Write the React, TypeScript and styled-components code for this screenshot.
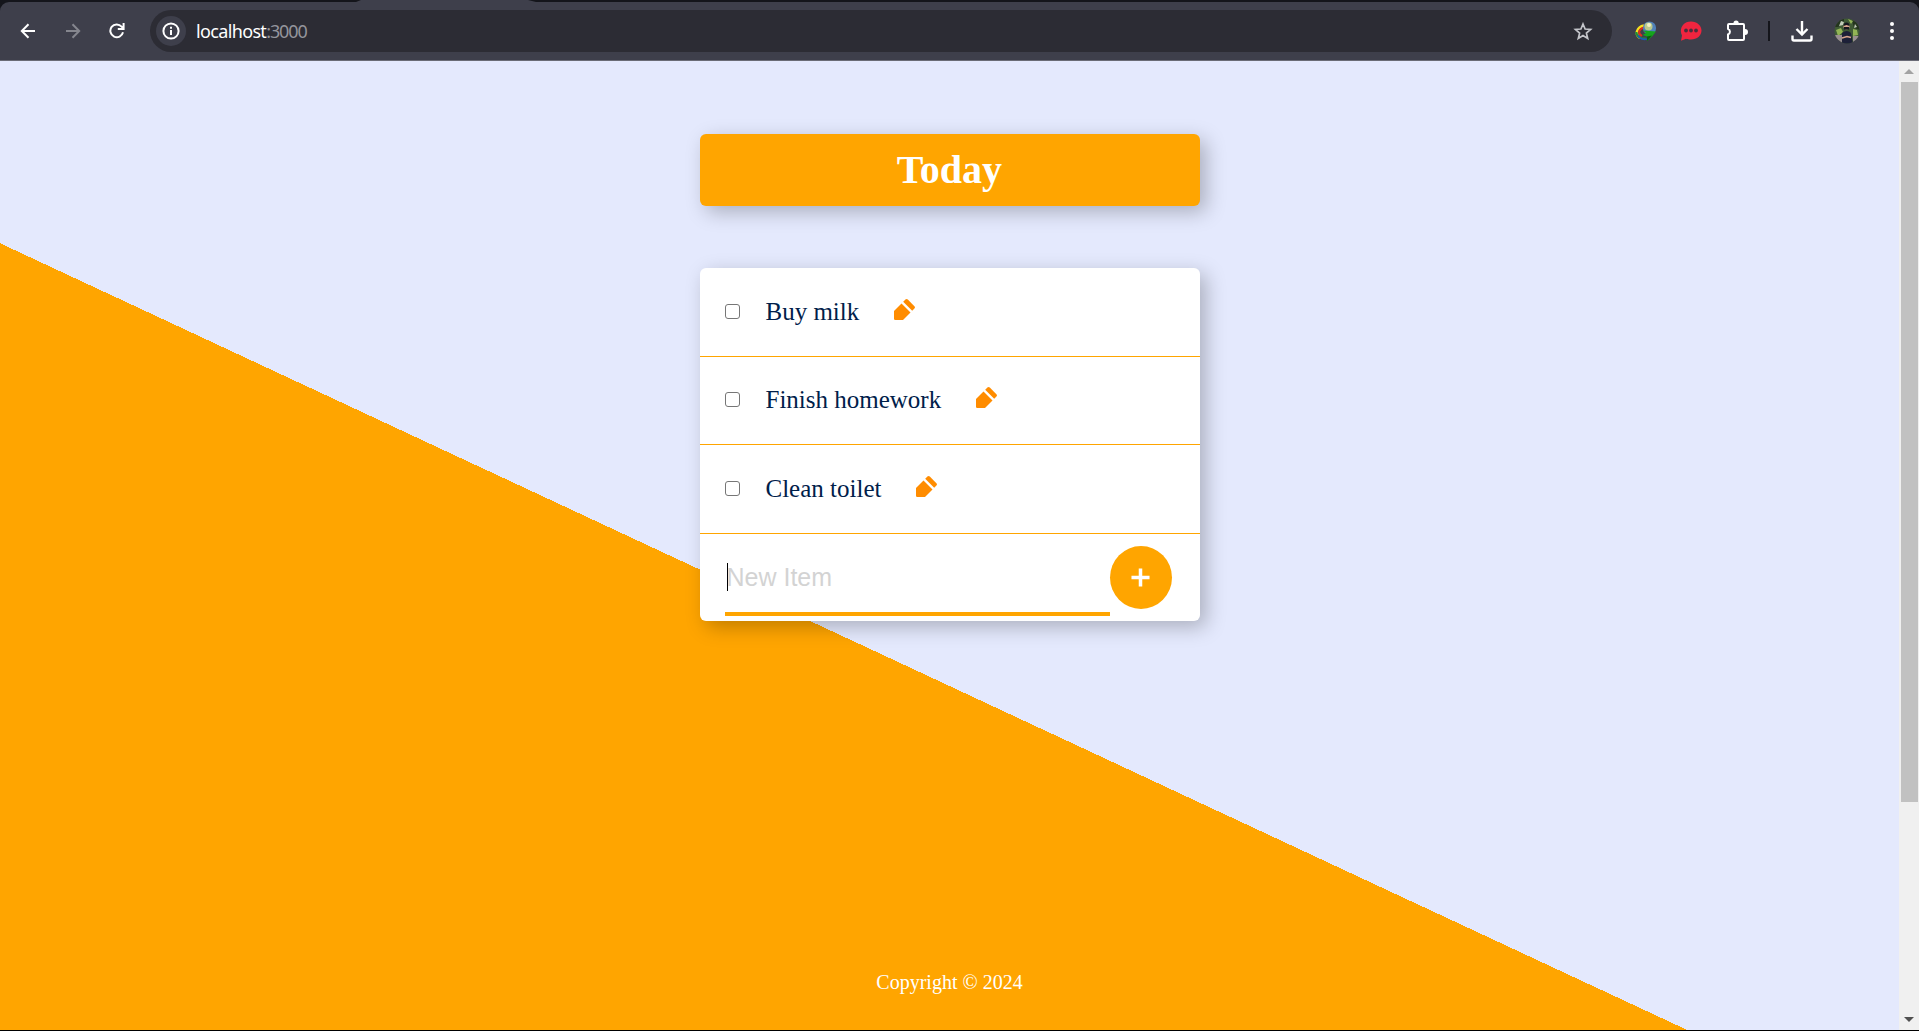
import React from "react";
import styled, { createGlobalStyle } from "styled-components";

const GlobalStyle = createGlobalStyle`
  html, body { margin: 0; padding: 0; overflow: hidden; }
  body { background: #000; }
  * { box-sizing: border-box; }
`;

const Window = styled.div`
  width: 1919px;
  height: 1031px;
  display: flex;
  flex-direction: column;
  background: #000;
  overflow: hidden;
`;

const TabStrip = styled.div`
  height: 2px;
  flex: none;
  display: flex;
  padding-left: 356px;
  background: #14151b;
`;

const ActiveTabFoot = styled.div`
  width: 180px;
  height: 2px;
  background: #3e3f4b;
  clip-path: polygon(5px 0, 172px 0, 100% 100%, 0 100%);
`;

const ToolbarBack = styled.div`
  height: 59px;
  flex: none;
  background: #14151b;
`;

const Toolbar = styled.div`
  height: 59px;
  display: flex;
  align-items: center;
  background: #3e3f4b;
  border-bottom: 1px solid #6a6b76;
  border-radius: 9px 9px 0 0;
  padding: 0 12px 0 13px;
`;

const NavGroup = styled.div`
  display: flex;
  gap: 14.500px;
  width: 137px;
  flex: none;
`;

const IconSlot = styled.span<{ $w?: number }>`
  width: ${(p) => p.$w ?? 30}px;
  height: 30px;
  display: flex;
  flex: none;
  align-items: center;
  justify-content: center;
`;

const AddressBar = styled.div`
  width: 1462px;
  height: 42px;
  flex: none;
  display: flex;
  align-items: center;
  border-radius: 21px;
  background: #2c2c34;
  padding: 0 14px 0 6px;
`;

const InfoBadge = styled.span`
  width: 30px;
  height: 30px;
  border-radius: 50%;
  display: flex;
  align-items: center;
  justify-content: center;
  background: #3e3f4b;
`;

const Address = styled.span`
  flex: 1;
  margin-left: 10px;
  font: 18px/24px "Noto Sans", "Open Sans", sans-serif;
  letter-spacing: -0.65px;
  color: #fff;
`;

const Port = styled.span`
  color: #94959c;
  letter-spacing: -1.1px;
`;

const Extensions = styled.div`
  flex: 1;
  display: flex;
  align-items: center;
  padding-left: 19px;
`;

const Divider = styled.span`
  width: 2px;
  height: 20px;
  margin: 0 17px 0 16px;
  background: #14151b;
`;

const ProfileGroup = styled.div`
  display: flex;
  gap: 15px;
  margin-left: auto;
`;

const Viewport = styled.div`
  height: 969px;
  flex: none;
  display: flex;
  overflow: hidden;
`;

const Page = styled.main`
  width: 1899px;
  height: 1250px;
  flex: none;
  display: flex;
  flex-direction: column;
  align-items: center;
  padding-top: 73px;
  background: linear-gradient(25deg, #ffa500 50%, #e4e9fd 50%);
  font-family: "Liberation Serif", "Times New Roman", serif;
`;

const Panel = styled.section`
  width: 500px;
  flex: none;
  border-radius: 6px;
  background: #fff;
  box-shadow: 6px 6px 20px rgba(0, 0, 0, 0.25);
`;

const Heading = styled(Panel)`
  height: 72px;
  display: flex;
  align-items: center;
  justify-content: center;
  background: #ffa500;
  margin-bottom: 62px;
`;

const Title = styled.h1`
  margin: 0;
  font-size: 40px;
  line-height: 46px;
  color: #fff;
`;

const Item = styled.div<{ $height: number; $top: number }>`
  height: ${(p) => p.$height}px;
  display: flex;
  align-items: flex-start;
  padding: ${(p) => p.$top}px 25px 0;
  border-bottom: 1px solid #ffa500;
`;

const Checkbox = styled.input`
  appearance: none;
  width: 15px;
  height: 15px;
  margin: 7px 26px 0 0;
  border: 1px solid #767676;
  border-radius: 3px;
  background: #fff;
`;

const ItemText = styled.p`
  margin: 0 35px 0 0;
  font-size: 25px;
  line-height: 29px;
  color: #00204a;
`;

const EditButton = styled.button`
  margin: 2px 0 0;
  padding: 0;
  border: 0;
  background: none;
  line-height: 0;
`;

const NewItem = styled.form`
  height: 87px;
  display: flex;
  padding-left: 25px;
`;

const Entry = styled.div`
  width: 385px;
  height: 82px;
  display: flex;
  align-items: center;
  border-bottom: 4px solid #ffa500;
  padding: 8px 0 0 2px;
`;

const Caret = styled.span`
  width: 1px;
  height: 28px;
  margin-right: -1px;
  background: #000;
`;

const Placeholder = styled.span`
  font: 25px/29px "Liberation Sans", Arial, sans-serif;
  color: #d3d3d3;
`;

const AddButton = styled.button`
  width: 62px;
  height: 63px;
  margin-top: 12px;
  padding: 0;
  border: 0;
  border-radius: 50%;
  display: flex;
  align-items: center;
  justify-content: center;
  background: #ffa500;
`;

const Footer = styled.footer`
  margin-top: 350px;
  font-size: 20px;
  line-height: 23px;
  color: #fff;
`;

const Scrollbar = styled.div`
  width: 20px;
  height: 969px;
  flex: none;
  display: flex;
  flex-direction: column;
  align-items: center;
  background: #f0f0f0;
`;

const Thumb = styled.div`
  width: 17px;
  height: 720px;
  margin-bottom: auto;
  background: #c1c1c1;
`;

const ScrollArrow = styled.span`
  height: 21px;
  display: flex;
  align-items: center;
`;

const PencilIcon = () => (
  <svg width="21" height="21" viewBox="0 0 21 21" fill="#ff8c00">
    <path d="M0 12 7.500 4.500 16.500 13.500 9 21H1.200Q0 21 0 19.800z" />
    <path d="M9.200 2.800 11.400.6q1.200-1.100 2.400 0l6.600 6.600q1.100 1.200 0 2.400l-2.200 2.200z" />
  </svg>
);

const DownloadManagerIcon = () => (
  <svg width="22" height="20" viewBox="0 0 22 20" fill="none">
    <path d="M9 4.500C2 6 -1 13 5 17" stroke="#f4df1e" strokeWidth="2.400" />
    <path d="M9 6.500C4 8 2 12 7 15" stroke="#d9301f" strokeWidth="2" />
    <path d="M1.300 11c0 4 4 7.500 10 6.500" stroke="#1c8d3c" strokeWidth="2.200" />
    <path d="M3 14.500c2 3.500 6 4.500 9 3.500" stroke="#1d55b8" strokeWidth="1.600" />
    <circle cx="14.500" cy="7" r="6.600" fill="#5081b9" />
    <circle cx="13.500" cy="5.500" r="4" fill="#b9c98c" />
    <circle cx="14" cy="4" r="2" fill="#f0efc4" />
    <path d="m8 9.500 13 1-3.500 4.500-5.500 5v-4.500L7.500 14l3.500-2z" fill="#14a51c" />
    <path d="m12 15.500 5-1-5 5.500z" fill="#0b5d12" />
  </svg>
);

const ChatIcon = () => (
  <svg width="22" height="20" viewBox="0 0 22 20">
    <path d="M1 19.800 2 14.500C-1 9 2 .5 11 .5c6 0 10.500 4 10.500 9s-4.500 9-10.500 9c-2 0-3.500-.2-5-.8z" fill="#f0253f" />
    <g fill="#4a2f3d">
      <circle cx="6" cy="9.500" r="1.900" />
      <circle cx="11" cy="9.500" r="1.900" />
      <circle cx="16" cy="9.500" r="1.900" />
    </g>
  </svg>
);

const Avatar = () => (
  <svg width="26" height="26" viewBox="0 0 26 26">
    <clipPath id="avatar-round"><circle cx="13" cy="13" r="12.500" /></clipPath>
    <g clipPath="url(#avatar-round)">
      <rect width="26" height="26" fill="#3f5a35" />
      <path d="M0 0h10v5L4 9H0zM18 2l6 3 2 7-6-2z" fill="#24351f" />
      <path d="M2 12 7 10l2 4-5 4zM19 11l4 1 1 5-5 1zM14 1l5 2-2 3z" fill="#92b455" />
      <path d="M7 3l3 1-1 3-4 1zM21 6l2 3-3 1z" fill="#c2cdb9" />
      <path d="M0 17h8v9H0zM19 18h7v8h-7z" fill="#9a8f91" />
      <path d="M8 15q5-4 9 0l2 11H8z" fill="#1d2038" />
      <circle cx="12.500" cy="8.500" r="3" fill="#d9a58d" />
      <path d="M9.500 8q0-3.500 3-3.500t3 3.500l-3-1zM10 9h5v2.500h-5z" fill="#16161f" />
      <path d="m8 20 5-1.500 4 1" stroke="#d9a58d" strokeWidth="1.600" fill="none" />
    </g>
  </svg>
);

const items = [
  { label: "Buy milk", height: 89, top: 29 },
  { label: "Finish homework", height: 88, top: 28 },
  { label: "Clean toilet", height: 89, top: 29 },
];

export default function App() {
  return (
    <Window>
      <GlobalStyle />
      <TabStrip><ActiveTabFoot /></TabStrip>
      <ToolbarBack>
        <Toolbar>
          <NavGroup>
            <IconSlot>
              <svg width="16" height="16" viewBox="0 0 16 16" fill="none" stroke="#fff" strokeWidth="2"><path d="M15 8H2M8.500 1.200 1.800 8l6.700 6.800" /></svg>
            </IconSlot>
            <IconSlot>
              <svg width="16" height="16" viewBox="0 0 16 16" fill="none" stroke="#85868e" strokeWidth="2"><path d="M1 8h13M7.500 1.200 14.200 8l-6.700 6.800" /></svg>
            </IconSlot>
            <IconSlot>
              <svg width="16" height="16" viewBox="0 0 16 16" fill="none" stroke="#fff" strokeWidth="2"><path d="M14 9.200A6.400 6.400 0 1 1 12.600 3.600L14 5.200M14.600 0v6H8.800" /></svg>
            </IconSlot>
          </NavGroup>
          <AddressBar>
            <InfoBadge>
              <svg width="18" height="18" viewBox="0 0 18 18" fill="none" stroke="#fff" strokeWidth="2"><circle cx="9" cy="9" r="7.600" /><path d="M9 8v5M9 4.800v2" /></svg>
            </InfoBadge>
            <Address>localhost<Port>:3000</Port></Address>
            <IconSlot>
              <svg width="20" height="19" viewBox="0 0 20 19" fill="none" stroke="#c4c5ca" strokeWidth="1.700"><path d="m10 2 2.100 5 5.500.5-4.200 3.600 1.300 5.400L10 13.600l-4.700 2.900 1.300-5.400-4.200-3.600 5.500-.5z" /></svg>
            </IconSlot>
          </AddressBar>
          <Extensions>
            <IconSlot><DownloadManagerIcon /></IconSlot>
            <IconSlot $w={60}><ChatIcon /></IconSlot>
            <IconSlot $w={31}>
              <svg width="22" height="22" viewBox="0 0 22 22" fill="none" stroke="#fff" strokeWidth="2"><path d="M3 4h14a1 1 0 0 1 1 1v14a1 1 0 0 1-1 1H3a1 1 0 0 1-1-1v-4.500a3 3 0 0 0 0-5.600V5a1 1 0 0 1 1-1z" /><path d="M8.500 3a1.600 1.600 0 0 1 3.200 0M19 10a1.800 1.800 0 0 1 0 4" fill="#fff" /></svg>
            </IconSlot>
            <Divider />
            <IconSlot>
              <svg width="22" height="22" viewBox="0 0 22 22" fill="none" stroke="#fff" strokeWidth="2.400"><path d="M11 1v13M5.500 9l5.500 5.500L16.500 9M1.500 15.500v3.500a1.500 1.500 0 0 0 1.500 1.500h16a1.500 1.500 0 0 0 1.500-1.500v-3.500" /></svg>
            </IconSlot>
            <ProfileGroup>
              <IconSlot><Avatar /></IconSlot>
              <IconSlot>
                <svg width="4" height="18" viewBox="0 0 4 18" fill="#fff"><circle cx="2" cy="2" r="2" /><circle cx="2" cy="9" r="2" /><circle cx="2" cy="16" r="2" /></svg>
              </IconSlot>
            </ProfileGroup>
          </Extensions>
        </Toolbar>
      </ToolbarBack>
      <Viewport>
        <Page>
          <Heading><Title>Today</Title></Heading>
          <Panel>
            {items.map((item) => (
              <Item key={item.label} $height={item.height} $top={item.top}>
                <Checkbox type="checkbox" />
                <ItemText>{item.label}</ItemText>
                <EditButton><PencilIcon /></EditButton>
              </Item>
            ))}
            <NewItem>
              <Entry><Caret /><Placeholder>New Item</Placeholder></Entry>
              <AddButton type="button">
                <svg width="19" height="19" viewBox="0 0 20 20" stroke="#fff" strokeWidth="3.700"><path d="M10 0.500v19M0.500 10h19" /></svg>
              </AddButton>
            </NewItem>
          </Panel>
          <Footer>Copyright © 2024</Footer>
        </Page>
        <Scrollbar>
          <ScrollArrow><svg width="10" height="5" viewBox="0 0 10 5"><path d="M5 0 10 5H0z" fill="#a3a3a3" /></svg></ScrollArrow>
          <Thumb />
          <ScrollArrow><svg width="10" height="5" viewBox="0 0 10 5"><path d="M0 0h10L5 5z" fill="#505050" /></svg></ScrollArrow>
        </Scrollbar>
      </Viewport>
    </Window>
  );
}
